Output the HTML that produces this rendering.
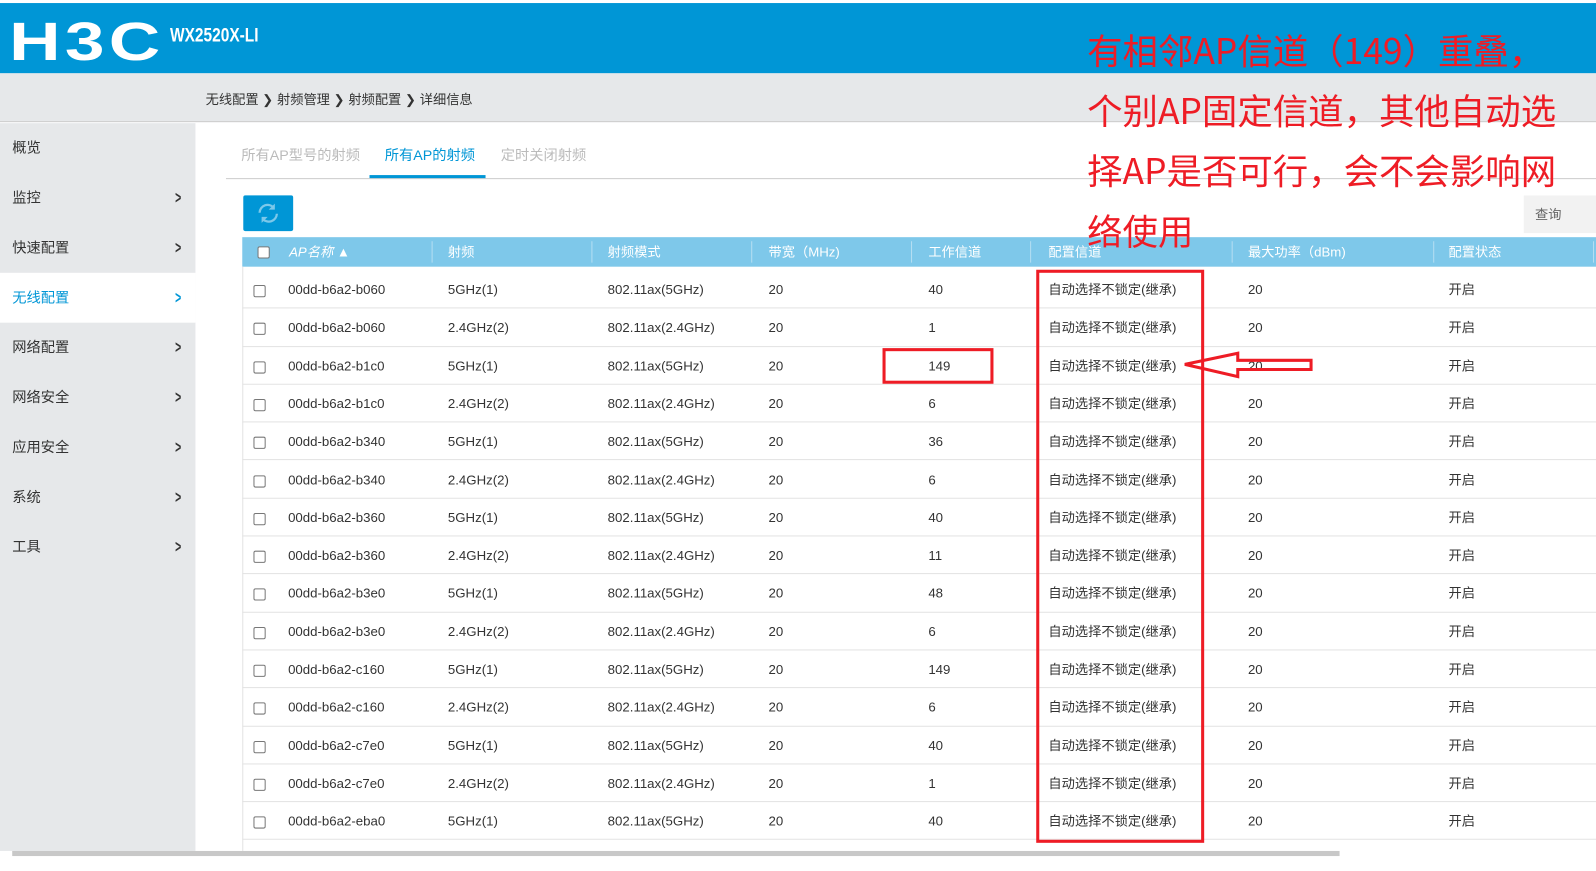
<!DOCTYPE html>
<html><head><meta charset="utf-8"><style>
*{margin:0;padding:0;box-sizing:border-box}
body{width:1596px;height:856px;overflow:hidden;background:#fff;font-family:"Liberation Sans","Noto Sans CJK SC",sans-serif;font-size:13px;color:#333;position:relative}
#wrap{position:absolute;left:0;top:0;width:1568px;height:841px;transform:scale(1.0179);transform-origin:0 0}
.abs{position:absolute}
#hdr{left:0;top:3px;width:1568px;height:69px;background:#0096d6}
#bc{left:0;top:72px;width:1568px;height:48px;background:#e6e8ea;border-bottom:1px solid #ccc}
#side{left:0;top:121px;width:192px;height:715px;background:#e6e8ea}
.mi{position:absolute;left:0;width:192px;height:49px;line-height:49px;padding-left:12px;font-size:14px;color:#333}
.mi .ar{position:absolute;right:12px;top:0;font-size:17px;font-weight:bold;transform:scaleX(.6)}
.tab{position:absolute;top:142px;font-size:14px;color:#bbb}
.th{position:absolute;top:233px;height:29px;line-height:29px;color:#fff;font-size:13px}
.row{position:absolute;left:238px;width:1330px;height:37.3px;border-bottom:1px solid #e3e3e3}
.c{position:absolute;top:0;line-height:37px;font-size:13px;color:#333}
.cb{position:absolute;width:12px;height:12px;border:1px solid #777;border-radius:2px;background:#fff}
.note{left:1068px;top:20px;color:#ee1c25;font-size:34.8px;line-height:59px;font-family:"Noto Sans CJK SC",sans-serif;white-space:nowrap}
</style></head><body>
<div id="wrap">
<div id="hdr" class="abs">
 <div class="abs" style="left:9px;top:18px;font-family:'Liberation Sans',sans-serif;font-weight:bold;font-size:50px;color:#fff;letter-spacing:3px;line-height:40px;transform:scaleX(1.4) scaleY(1.05);transform-origin:left">H3C</div>
 <div class="abs" style="left:167px;top:22px;color:#fff;font-weight:bold;font-size:19px;transform:scaleX(.8);transform-origin:left">WX2520X-LI</div>
</div>
<div id="bc" class="abs"><div class="abs" style="left:202px;top:15px;font-size:13px;color:#333">无线配置 ❯ 射频管理 ❯ 射频配置 ❯ 详细信息</div></div>
<div id="side" class="abs">
 <div class="mi" style="top:0">概览</div>
 <div class="mi" style="top:49px">监控<span class="ar">&gt;</span></div>
 <div class="mi" style="top:98px">快速配置<span class="ar">&gt;</span></div>
 <div class="mi" style="top:147px;background:#fff;color:#0096d6">无线配置<span class="ar">&gt;</span></div>
 <div class="mi" style="top:196px">网络配置<span class="ar">&gt;</span></div>
 <div class="mi" style="top:245px">网络安全<span class="ar">&gt;</span></div>
 <div class="mi" style="top:294px">应用安全<span class="ar">&gt;</span></div>
 <div class="mi" style="top:343px">系统<span class="ar">&gt;</span></div>
 <div class="mi" style="top:392px">工具<span class="ar">&gt;</span></div>
</div>
<div class="tab" style="left:237px">所有AP型号的射频</div>
<div class="tab" style="left:378px;color:#0096d6">所有AP的射频</div>
<div class="tab" style="left:492px">定时关闭射频</div>
<div class="abs" style="left:222px;top:175px;width:1346px;height:1px;background:#ccc"></div>
<div class="abs" style="left:363px;top:172px;width:114px;height:3px;background:#0096d6"></div>
<div class="abs" style="left:239px;top:192px;width:49px;height:35px;background:#0096d6;border-radius:2px">
<svg width="49" height="35" viewBox="0 0 49 35"><g fill="none" stroke="#7cc8ea" stroke-width="2.2"><path d="M16 17a8 8 0 0 1 14-5"/><path d="M33 18a8 8 0 0 1-14 5"/></g><path d="M31 8v6h-6z" fill="#7cc8ea"/><path d="M18 27v-6h6z" fill="#7cc8ea"/></svg></div>
<div class="abs" style="left:1497px;top:192px;width:71px;height:37px;background:#f2f2f2;color:#666;font-size:13px;line-height:37px;padding-left:11px">查询</div>
<div class="abs" style="left:238px;top:233px;width:1330px;height:29px;background:#7ec8ea"></div>
<div class="cb" style="left:253px;top:242px"></div>
<div class="th" style="left:284px;font-style:italic">AP名称 ▲</div>
<div class="th" style="left:440px">射频</div>
<div class="th" style="left:597px">射频模式</div>
<div class="th" style="left:755px">带宽（MHz)</div>
<div class="th" style="left:912px">工作信道</div>
<div class="th" style="left:1030px">配置信道</div>
<div class="th" style="left:1226px">最大功率（dBm)</div>
<div class="th" style="left:1423px">配置状态</div>
<div class="abs" style="left:424px;top:237px;width:1px;height:21px;background:#b5def2"></div>
<div class="abs" style="left:581px;top:237px;width:1px;height:21px;background:#b5def2"></div>
<div class="abs" style="left:738px;top:237px;width:1px;height:21px;background:#b5def2"></div>
<div class="abs" style="left:895px;top:237px;width:1px;height:21px;background:#b5def2"></div>
<div class="abs" style="left:1012px;top:237px;width:1px;height:21px;background:#b5def2"></div>
<div class="abs" style="left:1210px;top:237px;width:1px;height:21px;background:#b5def2"></div>
<div class="abs" style="left:1408px;top:237px;width:1px;height:21px;background:#b5def2"></div>
<div class="abs" style="left:1565px;top:237px;width:1px;height:21px;background:#b5def2"></div>
<div class="abs" style="left:238px;top:262px;width:1px;height:574px;background:#e3e3e3"></div>
<div id="rows"></div>
<div class="abs" style="left:0;top:836px;width:1568px;height:20px;background:#fff"></div>
<div class="abs" style="left:12px;top:836px;width:1304px;height:5px;background:#c8c8c8"></div>
<div class="abs" style="left:1018px;top:265px;width:165px;height:563px;border:3px solid #ee1c25"></div>
<div class="abs" style="left:867px;top:342px;width:109px;height:35px;border:3px solid #ee1c25"></div>
<svg class="abs" style="left:1150px;top:345px" width="145" height="28"><path d="M14 13 L66 2 L66 9 L138 9 L138 18 L66 18 L66 25 Z" fill="none" stroke="#ee1c25" stroke-width="3"/></svg>
<div class="abs note">有相邻AP信道（149）重叠，<br>个别AP固定信道，其他自动选<br>择AP是否可行，会不会影响网<br>络使用</div>
</div>
<script>
var d=[["b060","5GHz(1)","5GHz","40"],["b060","2.4GHz(2)","2.4GHz","1"],["b1c0","5GHz(1)","5GHz","149"],["b1c0","2.4GHz(2)","2.4GHz","6"],["b340","5GHz(1)","5GHz","36"],["b340","2.4GHz(2)","2.4GHz","6"],["b360","5GHz(1)","5GHz","40"],["b360","2.4GHz(2)","2.4GHz","11"],["b3e0","5GHz(1)","5GHz","48"],["b3e0","2.4GHz(2)","2.4GHz","6"],["c160","5GHz(1)","5GHz","149"],["c160","2.4GHz(2)","2.4GHz","6"],["c7e0","5GHz(1)","5GHz","40"],["c7e0","2.4GHz(2)","2.4GHz","1"],["eba0","5GHz(1)","5GHz","40"]];
var h="";for(var i=0;i<d.length;i++){var t=266+i*37.3;var r=d[i];
h+='<div class="row" style="top:'+t+'px"><div class="cb" style="left:11px;top:14px"></div><div class="c" style="left:45px">00dd-b6a2-'+r[0]+'</div><div class="c" style="left:202px">'+r[1]+'</div><div class="c" style="left:359px">802.11ax('+r[2]+')</div><div class="c" style="left:517px">20</div><div class="c" style="left:674px">'+r[3]+'</div><div class="c" style="left:792px">自动选择不锁定(继承)</div><div class="c" style="left:988px">20</div><div class="c" style="left:1185px">开启</div></div>';}
document.getElementById("rows").innerHTML=h;
</script>
</body></html>
